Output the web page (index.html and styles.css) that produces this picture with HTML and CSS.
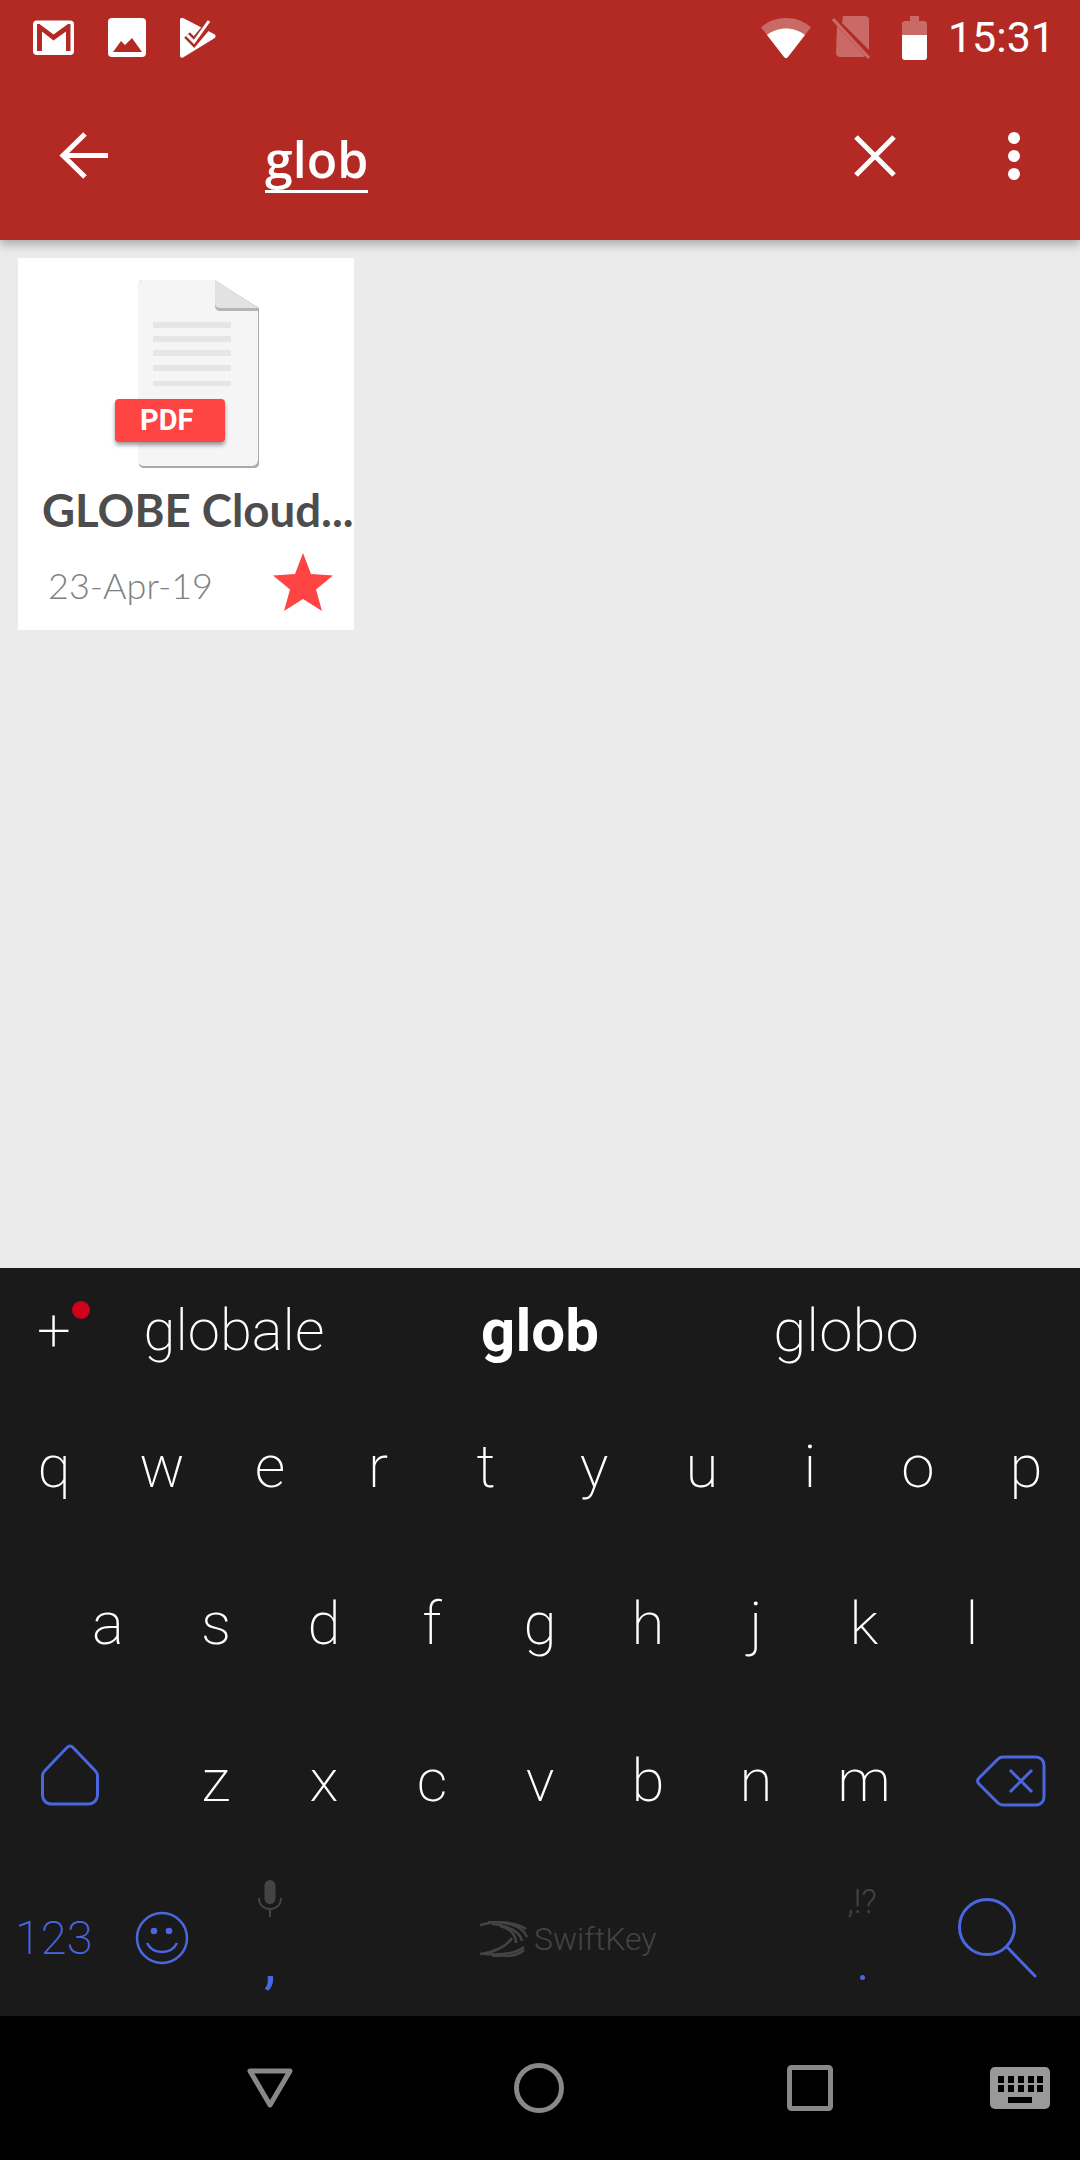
FILE: index.html
```html
<!DOCTYPE html>
<html lang="en">
<head>
    <meta charset="UTF-8">
    <meta name="viewport" content="width=device-width, initial-scale=1.0">
    <title>Search</title>
    <link rel="stylesheet" href="styles.css">
</head>
<body>
    <header class="appbar">
      <div class="statusbar">
        <div class="notif-icons">
          <svg class="ic-gmail" width="42" height="36" viewBox="0 0 42 36"><rect x="0" y="0.5" width="41" height="34.5" rx="4" fill="#fff"/><path d="M4 31V4h2.500L20.500 14.500 35 4h2.500v27H33V11.500L20.500 20.500 9 11.500V31z" fill="#b32a25"/></svg>
          <svg class="ic-image" width="38" height="40" viewBox="0 0 38 40"><rect width="38" height="39" rx="4" fill="#fff"/><path d="M5 34l8-11 4 4 7-7 10 14z" fill="#b32a25"/></svg>
          <svg class="ic-tasks" width="36" height="40" viewBox="0 0 36 40"><path d="M0 2c0-2 1.500-2.500 3-2l31 16c2 1 2 3.500 0 4.500L3 39.500c-1.500.5-3 0-3-2z" fill="#fff"/><path d="M7 17l7 7L30 5" fill="none" stroke="#b32a25" stroke-width="8"/><path d="M7 17l7 7L29 3" fill="none" stroke="#fff" stroke-width="3"/></svg>
        </div>
        <div class="system-icons">
          <svg class="ic-wifi" width="52" height="42" viewBox="0 0 52 42"><path d="M1 10.500C8 4 17 1 26 1s18 3 25 9.500L26 41z" fill="#fff" opacity=".3"/><path d="M7 18c5-4 12-6.500 19-6.500S40 14 45 18L28 40c-1 1.500-3 1.500-4 0z" fill="#fff"/></svg>
          <svg class="ic-sim" width="38" height="44" viewBox="0 0 38 44"><path d="M11 0h22c2 0 4 1.500 4 4v30L11 8l-1-1zM5 10l28 30c-1 1-2 1-3 1H8c-2 0-4-2-4-4z" fill="#fff" opacity=".3"/><path d="M1 3l36 39" stroke="#fff" stroke-width="3" opacity=".3"/></svg>
          <svg class="ic-battery" width="25" height="44" viewBox="0 0 25 44"><path d="M8 0h9v5h5c1.500 0 3 1 3 3v11H0V8c0-2 1.500-3 3-3h5z" fill="#fff" opacity=".3"/><path d="M0 19h25v22c0 2-1 3-3 3H3c-2 0-3-1-3-3z" fill="#fff"/></svg>
          <span class="clock">15:31</span>
        </div>
      </div>
      <div class="toolbar">
        <svg class="ic-back" width="50" height="50" viewBox="0 0 50 50"><path d="M49 24.500H4M26 3L4 24.500 26 46" fill="none" stroke="#fff" stroke-width="5"/></svg>
        <span class="query">glob</span>
        <svg class="ic-clear" width="42" height="42" viewBox="0 0 42 42"><path d="M2 2l38 38M40 2L2 40" stroke="#fff" stroke-width="5"/></svg>
        <svg class="ic-more" width="12" height="48" viewBox="0 0 12 48"><circle cx="6" cy="6" r="6" fill="#fff"/><circle cx="6" cy="24" r="6" fill="#fff"/><circle cx="6" cy="42" r="6" fill="#fff"/></svg>
      </div>
    </header>

    <main class="results">
      <div class="card">
        <div class="thumb">
          <svg width="152" height="188" viewBox="0 0 152 188">
            <path d="M28 0h74l45 28v156c0 2-2 4-5 4H32c-3 0-5-2-5-4V4z" fill="#aaa"/>
            <path d="M30 0h73l43 28v151c0 4-2 7-6 7H32c-4 0-6-3-6-7V4c0-2 2-4 4-4z" fill="#f5f5f5"/>
            <path d="M103 0v25c0 3 1 6 5 6h38v-3z" fill="#b5b5b5"/>
            <path d="M103 0v22c0 3 1 6 5 6h38z" fill="#e2e2e2"/>
            <g fill="#e6e6e6">
              <rect x="41" y="42" width="78" height="6"/><rect x="41" y="56" width="78" height="6"/><rect x="41" y="70" width="78" height="6"/><rect x="41" y="85" width="78" height="6"/><rect x="41" y="101" width="78" height="5"/>
            </g>
          </svg>
          <span class="pdf-badge">PDF</span>
        </div>
        <div class="card-title">GLOBE Cloud...</div>
        <div class="card-meta">
          <span class="card-date">23-Apr-19</span>
          <svg width="60" height="58" viewBox="0 0 60 58"><path d="M30 0l8 21 22 1.500-17 14 6 21.500-19-12-19 12 6-21.500-17-14L22 21z" fill="#ff4444"/></svg>
        </div>
      </div>
    </main>

    <section class="keyboard">
      <div class="suggestions">
        <span class="sug-plus">+<i class="sug-dot"></i></span>
        <span class="sug sug-left">globale</span>
        <span class="sug sug-mid">glob</span>
        <span class="sug sug-right">globo</span>
      </div>
      <div class="key-row">
        <span class="key">q</span><span class="key">w</span><span class="key">e</span><span class="key">r</span><span class="key">t</span><span class="key">y</span><span class="key">u</span><span class="key">i</span><span class="key">o</span><span class="key">p</span>
      </div>
      <div class="key-row row-inset">
        <span class="key">a</span><span class="key">s</span><span class="key">d</span><span class="key">f</span><span class="key">g</span><span class="key">h</span><span class="key">j</span><span class="key">k</span><span class="key">l</span>
      </div>
      <div class="key-row">
        <span class="key key-wide">
          <svg width="58" height="62" viewBox="0 0 58 62"><path d="M29 2c1 0 2 .5 3 1.500l22 23c1.500 1.500 2.500 3 2.500 5.500v19c0 5-4 9-9 9H10c-5 0-8.500-4-8.500-9V32c0-2.500 1-4 2.500-5.500l22-23C27 2.500 28 2 29 2z" fill="none" stroke="#4a66e0" stroke-width="3"/></svg>
        </span>
        <span class="key">z</span><span class="key">x</span><span class="key">c</span><span class="key">v</span><span class="key">b</span><span class="key">n</span><span class="key">m</span>
        <span class="key key-wide">
          <svg width="70" height="52" viewBox="0 0 70 52"><path d="M27 2h33c4 0 8 3 8 8v32c0 5-4 8-8 8H27c-2 0-4-1-5-2L3 29c-2-2-2-4 0-6L22 4c1-1 3-2 5-2z" fill="none" stroke="#4a66e0" stroke-width="3"/><path d="M34 15l22 22M56 15L34 37" stroke="#4a66e0" stroke-width="3"/></svg>
        </span>
      </div>
      <div class="key-row bottom-row">
        <span class="num-key">123</span>
        <svg class="ic-emoji" width="54" height="54" viewBox="0 0 54 54"><circle cx="27" cy="27" r="25" fill="none" stroke="#4a66e0" stroke-width="2.500"/><circle cx="19" cy="20" r="3.300" fill="#4a66e0"/><circle cx="34" cy="20" r="3.300" fill="#4a66e0"/><path d="M12 32c3 6 9 9 15 9s12-3 15-9" fill="none" stroke="#4a66e0" stroke-width="2.500"/></svg>
        <div class="comma-key">
          <svg width="24" height="38" viewBox="0 0 24 38"><rect x="6.500" y="0" width="11" height="24" rx="5.500" fill="#444"/><path d="M1 18c0 7 5 11 11 11s11-4 11-11M12 29v8" fill="none" stroke="#444" stroke-width="2"/></svg>
          <span class="comma">,</span>
        </div>
        <div class="brand">
          <svg width="50" height="36" viewBox="0 0 50 36"><g fill="none" stroke="#444" stroke-width="2.500"><path d="M0 4C14 0 34 0 46 8"/><path d="M8 1C24 0 42 4 47 16"/><path d="M12 3C26 4 40 10 42 20"/><path d="M20 5C30 7 36 14 36 22"/><path d="M0 33C12 32 26 26 32 17"/><path d="M4 33C16 34 34 34 44 26"/><path d="M12 35c12 1 26 0 32-6"/></g></svg>
          <span>SwiftKey</span>
        </div>
        <div class="period-key">
          <span class="punct">,!?</span>
          <i class="period-dot"></i>
        </div>
        <svg class="ic-search" width="80" height="84" viewBox="0 0 80 84"><circle cx="29" cy="30" r="27.500" fill="none" stroke="#4a66e0" stroke-width="3"/><path d="M49 50l28 29" stroke="#4a66e0" stroke-width="3" stroke-linecap="round"/></svg>
      </div>
    </section>

    <nav class="navbar">
      <svg width="46" height="40" viewBox="0 0 46 40"><path d="M3 3h40L23 37z" fill="none" stroke="#888" stroke-width="5" stroke-linejoin="round"/></svg>
      <svg width="50" height="50" viewBox="0 0 50 50"><circle cx="25" cy="25" r="22.500" fill="none" stroke="#888" stroke-width="5"/></svg>
      <svg width="46" height="46" viewBox="0 0 46 46"><rect x="2.500" y="2.500" width="41" height="41" rx="2" fill="none" stroke="#888" stroke-width="5"/></svg>
      <svg width="60" height="42" viewBox="0 0 60 42"><rect width="60" height="42" rx="5" fill="#999"/><g fill="#000"><rect x="8" y="9" width="6" height="7"/><rect x="18" y="9" width="6" height="7"/><rect x="28" y="9" width="6" height="7"/><rect x="38" y="9" width="6" height="7"/><rect x="47" y="9" width="6" height="7"/><rect x="8" y="18" width="6" height="7"/><rect x="18" y="18" width="6" height="7"/><rect x="28" y="18" width="6" height="7"/><rect x="38" y="18" width="6" height="7"/><rect x="47" y="18" width="6" height="7"/><rect x="18" y="30" width="24" height="6"/></g></svg>
    </nav>
</body>
</html>
```

FILE: styles.css
```css
* {
  box-sizing: border-box;
}

body {
  margin: 0;
  width: 1080px;
  height: 2160px;
  display: flex;
  flex-direction: column;
  background-color: #ebebeb;
  font-family: Roboto, sans-serif;
  overflow: hidden;
}

/* top red bar */
.appbar {
  height: 240px;
  background-color: #b32a25;
  box-shadow: 0 4px 10px rgba(0, 0, 0, 0.3);
  color: #fff;
  position: relative;
}

.statusbar {
  height: 76px;
  display: flex;
  justify-content: space-between;
  align-items: center;
  padding: 0 25px 0 33px;
}

.notif-icons {
  display: flex;
  align-items: center;
  gap: 33px;
}

.ic-tasks {
  margin-left: 1px;
}

.system-icons {
  display: flex;
  align-items: center;
}

.ic-sim {
  margin-left: 20px;
}

.ic-battery {
  margin-left: 32px;
}

.clock {
  font-size: 43px;
  margin-left: 21px;
  margin-top: -2px;
}

.toolbar {
  height: 164px;
  display: flex;
  align-items: center;
  padding-bottom: 4px;
}

.ic-back {
  margin-left: 59px;
}

.query {
  margin-left: 156px;
  margin-top: 8px;
  font-family: "Open Sans", sans-serif;
  font-size: 50px;
  font-weight: 600;
  line-height: 62px;
  border-bottom: 3px solid #fff;
}

.ic-clear {
  margin-left: auto;
}

.ic-more {
  margin: 0 60px 0 112px;
}

/* results */
.results {
  flex: 1;
  padding: 18px;
}

.card {
  width: 336px;
  height: 372px;
  background-color: #fff;
  display: flex;
  flex-direction: column;
}

.thumb {
  height: 200px;
  padding: 22px 0 0 94px;
  position: relative;
}

.pdf-badge {
  position: absolute;
  left: 97px;
  top: 141px;
  width: 110px;
  height: 43px;
  background-color: #ff4444;
  border-radius: 4px;
  box-shadow: 0 3px 4px rgba(0, 0, 0, 0.4);
  color: #fff;
  font-family: Roboto, sans-serif;
  font-weight: 700;
  font-size: 29px;
  line-height: 43px;
  padding-left: 25px;
}

.card-title {
  margin: 25px 0 0 24px;
  font-family: Lato, sans-serif;
  font-weight: 700;
  font-size: 45.6px;
  line-height: 54px;
  color: #4d4d4d;
  white-space: nowrap;
}

.card-meta {
  display: flex;
  align-items: center;
  justify-content: space-between;
  padding: 16px 21px 0 30px;
}

.card-date {
  font-family: Lato, sans-serif;
  font-weight: 300;
  font-size: 36px;
  color: #808080;
  margin-top: 6px;
}

/* keyboard */
.keyboard {
  height: 748px;
  background-color: #1a1a1a;
  color: #fff;
  display: flex;
  flex-direction: column;
}

.suggestions {
  height: 120px;
  padding-top: 4px;
  display: flex;
  align-items: center;
  position: relative;
  font-weight: 200;
  font-size: 60px;
}

.sug-plus {
  width: 108px;
  text-align: center;
  font-size: 60px;
  position: relative;
}

.sug-dot {
  position: absolute;
  left: 72px;
  top: 6px;
  width: 18px;
  height: 18px;
  border-radius: 50%;
  background-color: #d0021b;
}

.sug {
  text-align: center;
}

.sug-left {
  width: 250px;
  margin-left: 1px;
  font-size: 58px;
}

.sug-mid {
  width: 290px;
  margin-left: 36px;
  font-weight: 700;
}

.sug-right {
  width: 290px;
  margin-left: 16px;
}

.key-row {
  height: 157px;
  display: flex;
  align-items: center;
}

.row-inset {
  padding-left: 54px;
}

.key {
  width: 108px;
  text-align: center;
  font-weight: 200;
  font-size: 60px;
}

.key-wide {
  width: 162px;
  display: flex;
  justify-content: center;
  align-items: center;
}

.key-wide:first-child {
  padding: 0 22px 12px 0;
}

.key-wide:last-child {
  padding-left: 24px;
}

.bottom-row {
  position: relative;
}

.num-key {
  margin-left: 15px;
  font-weight: 200;
  font-size: 47px;
  color: #4a66e0;
}

.ic-emoji {
  margin-left: 42px;
}

.comma-key {
  position: absolute;
  left: 256px;
  top: 21px;
  width: 28px;
  height: 105px;
  display: flex;
  flex-direction: column;
  align-items: center;
  justify-content: space-between;
  color: #4a66e0;
}

.comma {
  font-size: 60px;
  line-height: 46px;
  font-weight: 400;
}

.brand {
  position: absolute;
  left: 480px;
  top: 61px;
  display: flex;
  align-items: center;
  gap: 4px;
  color: #444;
  font-weight: 300;
  font-size: 32px;
}

.period-key {
  position: absolute;
  left: 840px;
  top: 22px;
  width: 44px;
  height: 106px;
  display: flex;
  flex-direction: column;
  align-items: center;
  justify-content: space-between;
}

.punct {
  color: #444;
  font-weight: 300;
  font-size: 34px;
}

.period-dot {
  width: 5px;
  height: 5px;
  border-radius: 50%;
  background-color: #4a66e0;
  margin-bottom: 7px;
}

.ic-search {
  position: absolute;
  left: 958px;
  top: 38px;
}

/* android nav */
.navbar {
  height: 144px;
  background-color: #000;
  position: relative;
  display: flex;
  align-items: center;
  padding-left: 247px;
}

.navbar svg:nth-child(2) {
  margin-left: 221px;
}

.navbar svg:nth-child(3) {
  margin-left: 223px;
}

.navbar svg:nth-child(4) {
  margin-left: 157px;
}
```
